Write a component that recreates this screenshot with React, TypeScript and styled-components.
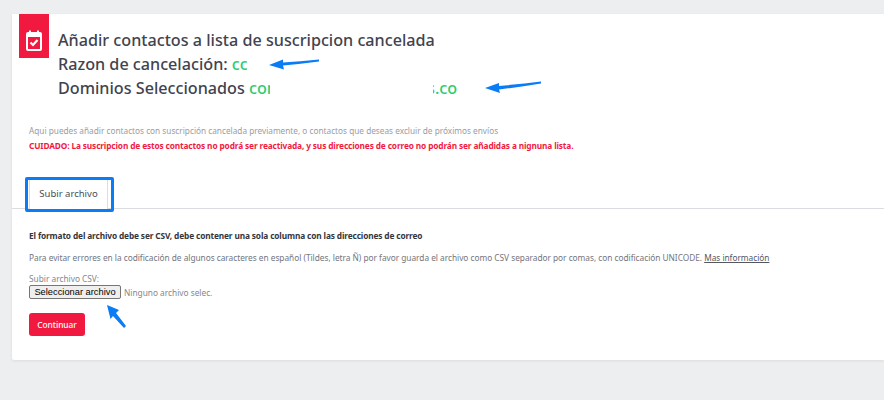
import styled, { createGlobalStyle } from 'styled-components';

const Global = createGlobalStyle`
  html, body {
    margin: 0;
    padding: 0;
    background: #eceef0;
    font-family: "Noto Sans", sans-serif;
  }
`;

const Page = styled.div`
  position: relative;
  width: 884px;
  height: 400px;
  padding: 14px 0 0 12px;
  box-sizing: border-box;
  overflow: hidden;
`;

const Card = styled.div`
  height: 346px;
  background: #fff;
  border-radius: 0 0 0 2px;
  box-shadow: 0 1px 3px rgba(0, 0, 0, 0.08);
`;

const Header = styled.div`
  display: flex;
  align-items: flex-start;
  padding-left: 7px;
  height: 110px;
`;

const IconTile = styled.div`
  width: 30px;
  height: 44px;
  flex: none;
  background: #f1193f;
  display: flex;
  align-items: flex-end;
  justify-content: center;
  padding-bottom: 7px;
  box-sizing: border-box;
`;

const Titles = styled.div`
  margin-left: 9px;
  padding-top: 14px;
`;

const TitleLine = styled.div`
  display: flex;
  height: 24px;
  line-height: 24px;
  font-size: 16.17px;
  font-weight: 500;
  color: #41434f;
  white-space: pre;
`;

const Green = styled.span`
  color: #2ecc71;
`;

const Masked = styled.span<{ $width: number; $gap?: number; $end?: boolean }>`
  display: inline-block;
  width: ${(p) => p.$width}px;
  margin-right: ${(p) => p.$gap ?? 0}px;
  overflow: hidden;
  color: #2ecc71;
  direction: ${(p) => (p.$end ? 'rtl' : 'ltr')};
`;

const Body = styled.div`
  padding-left: 17px;
`;

const Hint = styled.p`
  margin: 0;
  font-size: 8.25px;
  line-height: 14px;
  color: #9a9ca3;
`;

const Warning = styled.p`
  margin: 0;
  font-size: 8.3px;
  line-height: 15px;
  font-weight: 700;
  letter-spacing: -0.13px;
  color: #f1193f;
`;

const TabBar = styled.div`
  display: flex;
  margin-top: 26px;
  padding-left: 17px;
  height: 29px;
  border-bottom: 1px solid #dcdde0;
`;

const Tab = styled.div`
  width: 79px;
  height: 30px;
  box-sizing: border-box;
  background: #fff;
  border: 1px solid #dcdde0;
  border-bottom: 0;
  font-size: 9.5px;
  line-height: 28px;
  text-align: center;
  color: #4a4c55;
`;

const Form = styled.div`
  padding: 21px 0 0 17px;
`;

const Strong = styled.p`
  margin: 0;
  font-size: 8.3px;
  line-height: 12px;
  font-weight: 700;
  letter-spacing: -0.13px;
  color: #33353d;
`;

const Note = styled.p`
  margin: 10px 0 0;
  font-size: 8.3px;
  line-height: 12px;
  letter-spacing: -0.02px;
  color: #73757d;
`;

const InfoLink = styled.a`
  color: #55575f;
  text-decoration: underline;
`;

const FieldLabel = styled.label`
  display: block;
  margin-top: 10px;
  font-size: 8.3px;
  line-height: 10px;
  color: #85878e;
`;

const FileRow = styled.div`
  display: flex;
  align-items: center;
  gap: 3px;
  margin-top: 1px;
`;

const FileButton = styled.button`
  width: 92px;
  height: 14px;
  padding: 0;
  box-sizing: border-box;
  background: #efefef;
  border: 1px solid #767676;
  border-radius: 2px;
  font-family: "Liberation Sans", Arial, sans-serif;
  font-size: 9.3px;
  line-height: 12px;
  color: #000;
`;

const FileName = styled.span`
  font-size: 8.3px;
  color: #85878e;
`;

const Submit = styled.button`
  display: block;
  margin-top: 14px;
  width: 56px;
  height: 23px;
  padding: 0;
  background: #f1193f;
  border: 0;
  border-radius: 3px;
  font-family: "Noto Sans", sans-serif;
  font-size: 8.3px;
  font-weight: 500;
  color: #fff;
`;

// anotaciones de la captura, van encima del contenido
const TabHighlight = styled.div`
  position: absolute;
  left: 25px;
  top: 177px;
  width: 89px;
  height: 35px;
  box-sizing: border-box;
  border: 3px solid #0a7cf5;
  border-radius: 2px;
`;

const Arrows = styled.svg`
  position: absolute;
  left: 0;
  top: 0;
  pointer-events: none;
`;

function CalendarIcon() {
  return (
    <svg width="16" height="21" viewBox="0 0 16 21" fill="none">
      <path d="M4 0.5V4M12 0.5V4" stroke="#fff" strokeWidth="2" />
      <rect x="1" y="3" width="14" height="17" rx="1" stroke="#fff" strokeWidth="2" />
      <rect x="1" y="3" width="14" height="4" fill="#fff" />
      <path d="M4.5 12.5L7 15L11.5 10" stroke="#fff" strokeWidth="2.2" />
    </svg>
  );
}

export default function App() {
  return (
    <>
      <Global />
      <Page>
        <Card>
          <Header>
            <IconTile>
              <CalendarIcon />
            </IconTile>
            <Titles>
              <TitleLine>Añadir contactos a lista de suscripcion cancelada</TitleLine>
              <TitleLine>
                Razon de cancelación: <Masked $width={15}>cc</Masked>
              </TitleLine>
              <TitleLine>
                Dominios Seleccionados <Masked $width={21} $gap={163}>com</Masked>
                <Masked $width={2} $end>s</Masked>
                <Green>.co</Green>
              </TitleLine>
            </Titles>
          </Header>
          <Body>
            <Hint>Aqui puedes añadir contactos con suscripción cancelada previamente, o contactos que deseas excluir de próximos envíos</Hint>
            <Warning>CUIDADO: La suscripcion de estos contactos no podrá ser reactivada, y sus direcciones de correo no podrán ser añadidas a nignuna lista.</Warning>
          </Body>
          <TabBar>
            <Tab>Subir archivo</Tab>
          </TabBar>
          <Form>
            <Strong>El formato del archivo debe ser CSV, debe contener una sola columna con las direcciones de correo</Strong>
            <Note>
              Para evitar errores en la codificación de algunos caracteres en español (Tildes, letra Ñ) por favor guarda el archivo como CSV separador por comas, con codificación UNICODE. <InfoLink>Mas información</InfoLink>
            </Note>
            <FieldLabel>Subir archivo CSV:</FieldLabel>
            <FileRow>
              <FileButton>Seleccionar archivo</FileButton>
              <FileName>Ninguno archivo selec.</FileName>
            </FileRow>
            <Submit>Continuar</Submit>
          </Form>
        </Card>
        <TabHighlight />
        <Arrows width="884" height="400" viewBox="0 0 884 400">
          <path d="M269 65 L283 59.5 L283 62.5 Q300 61.5 319 59.5 L319 61.5 Q300 64 283 65.5 L284 69.5 Z" fill="#0a7cf5" />
          <path d="M485 88 L499 83 L499 86 Q520 84 541 81.5 L541 83.5 Q520 87 499 89.5 L500 93 Z" fill="#0a7cf5" />
          <path d="M107 305 L119 310 L116 313 L126 326 L124 328 L113 316 L110.5 319 Z" fill="#0a7cf5" />
        </Arrows>
      </Page>
    </>
  );
}
